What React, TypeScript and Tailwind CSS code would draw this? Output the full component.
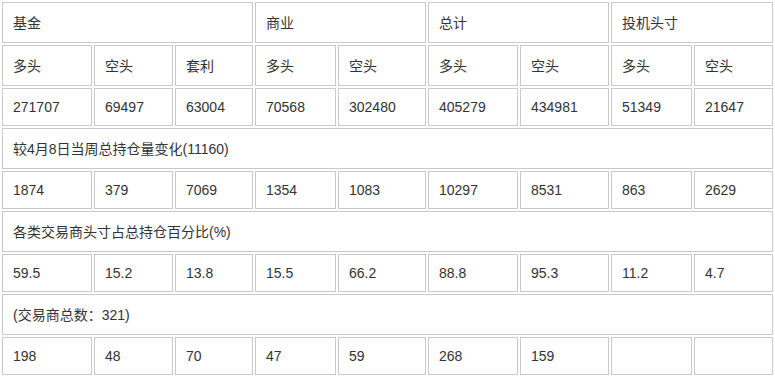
import React from "react";

type Cell = { text: string; span?: number };

// row height follows the reference: rows with CJK text are taller
const rows: { h: string; cells: Cell[] }[] = [
  {
    h: "h-[41px]",
    cells: [
      { text: "基金", span: 3 },
      { text: "商业", span: 2 },
      { text: "总计", span: 2 },
      { text: "投机头寸", span: 2 },
    ],
  },
  {
    h: "h-[41px]",
    cells: ["多头", "空头", "套利", "多头", "空头", "多头", "空头", "多头", "空头"].map((t) => ({ text: t })),
  },
  {
    h: "h-[38px]",
    cells: ["271707", "69497", "63004", "70568", "302480", "405279", "434981", "51349", "21647"].map((t) => ({ text: t })),
  },
  { h: "h-[41px]", cells: [{ text: "较4月8日当周总持仓量变化(11160)", span: 9 }] },
  {
    h: "h-[38px]",
    cells: ["1874", "379", "7069", "1354", "1083", "10297", "8531", "863", "2629"].map((t) => ({ text: t })),
  },
  { h: "h-[41px]", cells: [{ text: "各类交易商头寸占总持仓百分比(%)", span: 9 }] },
  {
    h: "h-[38px]",
    cells: ["59.5", "15.2", "13.8", "15.5", "66.2", "88.8", "95.3", "11.2", "4.7"].map((t) => ({ text: t })),
  },
  { h: "h-[41px]", cells: [{ text: "(交易商总数：321)", span: 9 }] },
  {
    h: "h-[38px]",
    cells: ["198", "48", "70", "47", "59", "268", "159", "", ""].map((t) => ({ text: t })),
  },
];

const spanClass: Record<number, string> = {
  1: "col-span-1",
  2: "col-span-2",
  3: "col-span-3",
  9: "col-span-9",
};

export default function App() {
  return (
    <div className="w-[775px] h-[377px] bg-white">
      <div
        className="grid grid-cols-[90px_79px_78px_81px_88px_90px_89px_81px_79px] gap-[2px] p-[2px] text-[14px] text-[#333]"
        style={{ fontFamily: '"Liberation Sans", Arial, "Noto Sans CJK SC", sans-serif' }}
      >
        {rows.map((row, ri) =>
          row.cells.map((c, ci) => (
            <div
              key={`${ri}-${ci}`}
              className={`${row.h} ${spanClass[c.span ?? 1]} flex items-center border border-[#c9c9c9] pl-[10px] leading-[16px] whitespace-nowrap`}
            >
              {c.text}
            </div>
          ))
        )}
      </div>
    </div>
  );
}
